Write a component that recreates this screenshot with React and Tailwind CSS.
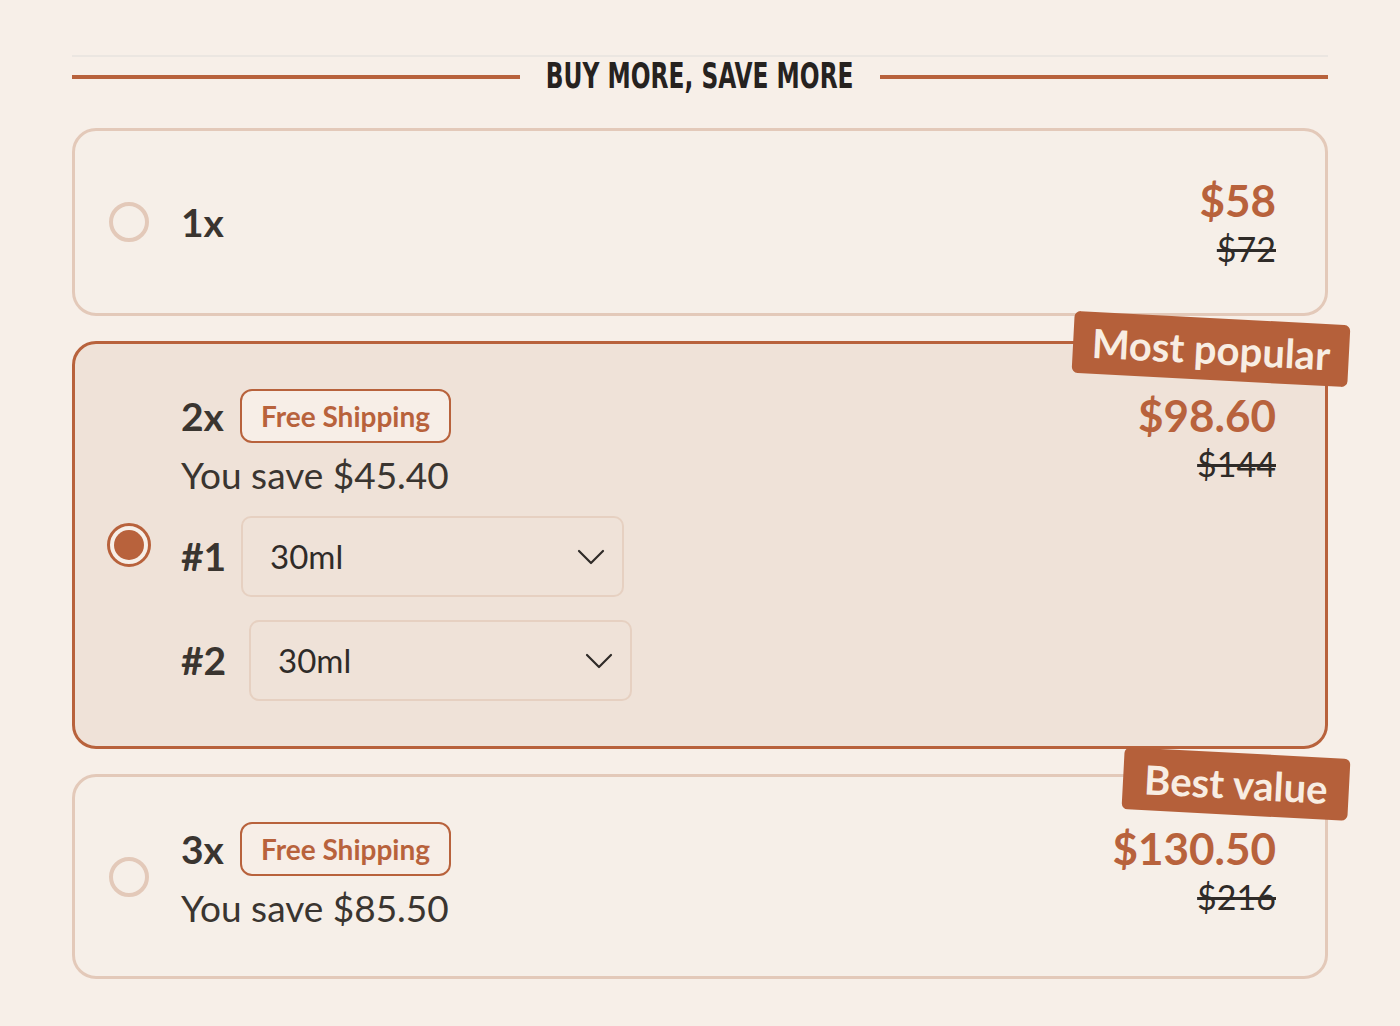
const bundles = [
  { qty: '1x', price: '$58', was: '$72' },
  {
    qty: '2x',
    price: '$98.60',
    was: '$144',
    save: '$45.40',
    shipping: true,
    selected: true,
    badge: 'Most popular',
    items: ['30ml', '30ml'],
  },
  { qty: '3x', price: '$130.50', was: '$216', save: '$85.50', shipping: true, badge: 'Best value' },
];

const Chevron = () => (
  <svg width="28" height="16" viewBox="0 0 28 16" fill="none" stroke="#2f2b28" strokeWidth="2.2" strokeLinecap="round" strokeLinejoin="round">
    <path d="M2 2l12 12L26 2" />
  </svg>
);

const Radio = ({ checked }) =>
  checked ? (
    <div className="w-[44px] h-[44px] rounded-full border-[3px] border-[#b8623c] bg-[#f7efe8] flex items-center justify-center shrink-0">
      <div className="w-[30px] h-[30px] rounded-full bg-[#b8623c]" />
    </div>
  ) : (
    <div className="w-[40px] h-[40px] rounded-full border-[4px] border-[#e3c9b9] shrink-0 mx-[2px]" />
  );

const SizeSelect = ({ label, value, second }) => (
  <div className="flex items-center gap-[14px]">
    <span className={`text-[39px] font-bold text-[#3a3530] leading-none ${second ? 'w-[54px]' : 'w-[46px]'}`}>{label}</span>
    <div className="w-[383px] h-[81px] rounded-[10px] border-2 border-[#e6d0c1] flex items-center justify-between pl-[27px] pr-[17px]">
      <span className="text-[33px] text-[#2f2b28]">{value}</span>
      <Chevron />
    </div>
  </div>
);

const BundleCard = ({ b }) => (
  <div
    className={`relative flex items-center rounded-[24px] border-[3px] pl-[32px] pr-[49px] py-[45px] ${
      b.selected ? 'border-[#b8623c] bg-[#efe2d8]' : 'border-[#e3c9b9] bg-[#f6efe8]'
    }`}
  >
    {b.badge && (
      <div
        className={`absolute right-[-24px] rotate-[3deg] rounded-[6px] bg-[#b5603a] text-[#f8ede2] font-bold h-[62px] flex items-center justify-center text-[40px] ${
          b.selected ? 'top-[-26px] w-[276px]' : 'top-[-24px] w-[226px]'
        }`}
      >
        {b.badge}
      </div>
    )}
    <Radio checked={b.selected} />
    <div className="flex-1 pl-[30px]">
      <div className="flex items-center gap-[16px]">
        <span className="text-[39px] font-bold text-[#3a3530] leading-none">{b.qty}</span>
        {b.shipping && (
          <span className="h-[54px] px-[19px] rounded-[12px] border-2 border-[#b8623c] bg-[#f7eee7] text-[#b8623c] text-[28px] font-bold flex items-center">
            Free Shipping
          </span>
        )}
      </div>
      {b.save && <div className="text-[37px] text-[#3a3530] leading-[1.2] mt-[10px]">You save {b.save}</div>}
      {b.items && (
        <div className="flex flex-col gap-[23px] mt-[19px]">
          {b.items.map((v, i) => (
            <SizeSelect key={i} label={`#${i + 1}`} value={v} second={i === 1} />
          ))}
        </div>
      )}
    </div>
    <div className={`self-start text-right ${b.save ? 'pt-[2px]' : ''}`}>
      <div className="text-[44px] font-bold text-[#b8623c] leading-[48px]">{b.price}</div>
      <div className="text-[34px] text-[#2f2b28] line-through leading-[38px] mt-[6px]">{b.was}</div>
    </div>
  </div>
);

export default function App() {
  return (
    <div className="min-h-screen bg-[#f7efe8] px-[72px] pt-[55px] pb-[50px]" style={{ fontFamily: 'Lato, "Open Sans", sans-serif' }}>
      <div className="h-[2px] bg-[#ebe6e1]" />
      <div className="flex items-center gap-[28px] mt-[2px]">
        <div className="flex-1 h-[4px] bg-[#b8623c]" />
        <div className="w-[304px] h-[36px] flex items-center justify-center">
          <h2
            className="text-[36px] font-bold text-[#26221f] leading-[36px] whitespace-nowrap scale-x-[0.72] -translate-y-[1px]"
            style={{ fontFamily: '"DejaVu Sans Condensed", "DejaVu Sans", sans-serif' }}
          >
            BUY MORE, SAVE MORE
          </h2>
        </div>
        <div className="flex-1 h-[4px] bg-[#b8623c]" />
      </div>
      <div className="flex flex-col gap-[25px] mt-[33px]">
        {bundles.map((b) => (
          <BundleCard key={b.qty} b={b} />
        ))}
      </div>
    </div>
  );
}
